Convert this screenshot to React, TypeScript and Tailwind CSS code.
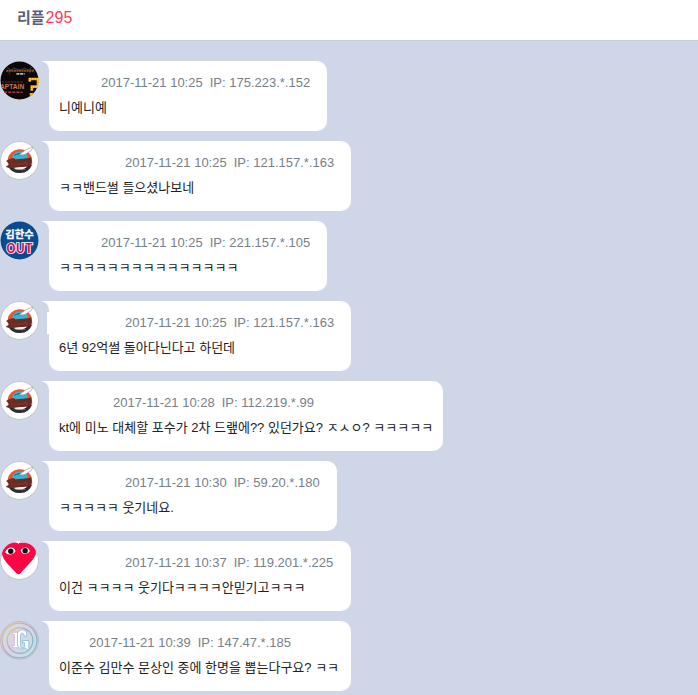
/**
 * 리플 목록 - 말풍선 형태의 댓글
 */
import type { ReactNode } from "react";

type AvatarKind = "captain" | "giants" | "out" | "heart" | "crest";

interface Reply {
  id: number;
  avatar: AvatarKind;
  date: string;
  ip: string;
  text: string;
  /** 말풍선 너비 */
  bubbleCls: string;
  /** 닉네임 자리 */
  nameCls: string;
  notch?: boolean;
}

const replies: Reply[] = [
  { id: 1, avatar: "captain", date: "2017-11-21 10:25", ip: "175.223.*.152", text: "니예니예", bubbleCls: "w-[278px]", nameCls: "w-[42px]" },
  { id: 2, avatar: "giants", date: "2017-11-21 10:25", ip: "121.157.*.163", text: "ㅋㅋ밴드썰 들으셨나보네", bubbleCls: "w-[302px]", nameCls: "w-[66px]" },
  { id: 3, avatar: "out", date: "2017-11-21 10:25", ip: "221.157.*.105", text: "ㅋㅋㅋㅋㅋㅋㅋㅋㅋㅋㅋㅋㅋㅋㅋ", bubbleCls: "w-[278px]", nameCls: "w-[42px]" },
  { id: 4, avatar: "giants", date: "2017-11-21 10:25", ip: "121.157.*.163", text: "6년 92억썰 돌아다닌다고 하던데", bubbleCls: "w-[302px]", nameCls: "w-[66px]", notch: true },
  { id: 5, avatar: "giants", date: "2017-11-21 10:28", ip: "112.219.*.99", text: "kt에 미노 대체할 포수가 2차 드랲에?? 있던가요? ㅈㅅㅇ? ㅋㅋㅋㅋㅋ", bubbleCls: "w-[394px]", nameCls: "w-[54px]" },
  { id: 6, avatar: "giants", date: "2017-11-21 10:30", ip: "59.20.*.180", text: "ㅋㅋㅋㅋㅋ 웃기네요.", bubbleCls: "w-[288px]", nameCls: "w-[66px]" },
  { id: 7, avatar: "heart", date: "2017-11-21 10:37", ip: "119.201.*.225", text: "이건 ㅋㅋㅋㅋ 웃기다ㅋㅋㅋㅋ안믿기고ㅋㅋㅋ", bubbleCls: "w-[302px]", nameCls: "w-[66px]" },
  { id: 8, avatar: "crest", date: "2017-11-21 10:39", ip: "147.47.*.185", text: "이준수 김만수 문상인 중에 한명을 뽑는다구요? ㅋㅋ", bubbleCls: "w-[302px]", nameCls: "w-[30px]" },
];

const art: Record<AvatarKind, ReactNode> = {
  captain: (
    <>
      <circle cx="19" cy="19" r="18.5" fill="#0d0708" />
      <path d="M7 6l3 3 4-2 5 2 5-2 4 2 3-3M9 9v4M29 9v4" stroke="#283a42" strokeWidth="1" fill="none" />
      <path d="M6 9.5h27" stroke="#8a5128" strokeWidth="2" strokeDasharray="2 .5" />
      <path d="M16 12.5h8" stroke="#b9b4b4" strokeWidth="1.6" strokeDasharray="3 .6" />
      <path d="M2 20.5h21" stroke="#713b2c" strokeWidth="1" strokeDasharray="2 1" />
      <text x="0" y="27.5" fontSize="6.5" fontWeight="700" fill="#c67a5c" className="font-['Liberation_Sans',sans-serif]">APTAIN</text>
      <path d="M4 30.5h18" stroke="#9c4133" strokeWidth="1.5" strokeDasharray="3 1" />
      <path d="M29 20v-2.5h8V25h-6v4" stroke="#e9a51f" strokeWidth="2.6" fill="none" />
      <path d="M29 20v-2.5h8V25h-6v4" stroke="#ffdf6b" strokeWidth="1.2" strokeDasharray="1.2 1.2" fill="none" />
      <path d="M29 32.5h4" stroke="#f0b321" strokeWidth="2.6" />
    </>
  ),
  giants: (
    <>
      <circle cx="19" cy="19" r="18.5" fill="#fff" stroke="#c3c3c3" />
      <path d="M7.5 18a12 11 0 0 1 23.500-2l.5 7H8z" fill="#e8553a" />
      <path d="M9.500 24a10.500 8.500 0 0 0 20-1" fill="none" stroke="#2c2e33" strokeWidth="3.400" />
      <path d="M12 17c0-5 5-8 10-6.500 4 1 6 4 5 7.500z" fill="#35b4d8" />
      <path d="M14 14c3-2 6-1 8-3" stroke="#1d4a63" strokeWidth=".8" fill="none" />
      <path d="M19 13.500c1-2 4-3 6-5l7.500-3-2.500 4.500c-3 .5-4 3-7 3.500z" fill="#fff" stroke="#8d8883" strokeWidth=".5" />
      <path d="M6 19.500c4-3 8-3.500 9-1.500 5-1 10-.5 15-2 1.500 3 1 6-.5 8.500-5 1-11 .5-15 1.500-4 1-7 0-9-1 2-1 4-2 3-3z" fill="#672c22" />
      <path d="M10 20c2-1 3 0 2 1s-2 2 0 2.500 3-2.500 4-1.500 0 2 2 1l1-2 1 2 2-2 1 2 2-3 1 3 2-2" fill="none" stroke="#94432f" strokeWidth=".6" />
      <path d="M15 27.500h9" stroke="#e9a596" strokeWidth="1" strokeDasharray="2 .7" />
    </>
  ),
  out: (
    <>
      <circle cx="19" cy="19" r="18.5" fill="#084b90" />
      <text x="19" y="17" textAnchor="middle" fontSize="10" fontWeight="700" fill="#fff" stroke="#fff" strokeWidth=".3" className="font-['Noto_Sans_CJK_KR',sans-serif]">김한수</text>
      <text x="19" y="31" textAnchor="middle" fontSize="12" fontWeight="700" fill="#dc0b57" stroke="#fff" strokeWidth="1.6" paintOrder="stroke" className="font-['Noto_Sans_CJK_KR',sans-serif]">OUT</text>
    </>
  ),
  heart: (
    <>
      <circle cx="19" cy="19" r="18.5" fill="#fff" stroke="#c3c3c3" />
      <path d="M18 2C8 0 2 7 2 13c1 6 9 13 14 18.500q2 2 4 0c6-7 13-13 15-19C36 6 29 0 18 2z" fill="#ff0543" />
      <path d="M15 0l3 3 2-3z" fill="#fff" />
      <path d="M5 11c2-6 8-6 10-2 0 4-7 6-10 2zM20 9c4-5 9-2 9 1-3 4-8 3-9-1z" fill="#fff" />
      <circle cx="10.500" cy="10" r="2.600" fill="#111" />
      <circle cx="24.500" cy="9.500" r="2.600" fill="#111" />
    </>
  ),
  crest: (
    <>
      <defs>
        <linearGradient id="crestRing" x1="0" y1="0" x2="1" y2="1">
          <stop offset="0" stopColor="#e2d36c" />
          <stop offset=".3" stopColor="#dba6af" />
          <stop offset=".55" stopColor="#a7a2cd" />
          <stop offset=".8" stopColor="#75bfcb" />
          <stop offset="1" stopColor="#a9c89b" />
        </linearGradient>
      </defs>
      <circle cx="19" cy="19" r="18.500" fill="#d2d8e4" stroke="#b9bec4" />
      <circle cx="19" cy="19" r="17" fill="none" stroke="url(#crestRing)" strokeWidth="1.2" />
      <circle cx="19.500" cy="19" r="12.500" fill="none" stroke="url(#crestRing)" strokeWidth="1.2" />
      <path d="M12 11h7v2h-2v11h2v2h-7v-2h2V13h-2z" fill="#fff" stroke="#d39bc2" strokeWidth=".6" />
      <path d="M26 9v6h-2c-1-4-4-4-4-1v10c1 4 4 3 4 0v-3h-2v-2h6v9h-2l-1-2c-3 3-8 1-8-4V14c0-5 4-7 8-4z" fill="#fff" stroke="#71a8cc" strokeWidth=".6" />
    </>
  ),
};

function Avatar({ kind }: { kind: AvatarKind }) {
  return (
    <svg viewBox="0 0 38 38" className="size-[39px] shrink-0 rounded-full" aria-hidden="true">
      {art[kind]}
    </svg>
  );
}

function ReplyItem({ reply }: { reply: Reply }) {
  return (
    <li className="flex items-start">
      <Avatar kind={reply.avatar} />
      <div className={`relative ml-[10px] h-[70px] rounded-[10px] rounded-tl-none bg-white px-[10px] pt-[9px] whitespace-nowrap ${reply.bubbleCls}`}>
        <svg viewBox="0 0 8 10" className="absolute top-0 right-full h-[10px] w-2 text-white" aria-hidden="true">
          <path d="M0 0H8V10C8 4 5 1 0 0z" fill="currentColor" />
        </svg>
        {reply.notch && <span className="absolute top-[11px] right-full h-[22px] w-[2px] bg-white" />}
        <div className="flex h-[26px] items-center text-[#777f88]">
          <span className={`shrink-0 ${reply.nameCls}`} />
          <span className="mr-[7px]">{reply.date}</span>
          <span>IP: {reply.ip}</span>
        </div>
        <p className="h-6 leading-6 text-[#222]">{reply.text}</p>
      </div>
    </li>
  );
}

export default function App() {
  return (
    <div className="flex min-h-screen flex-col bg-[#cfd6e8] font-['Liberation_Sans','Noto_Sans_CJK_KR',sans-serif] text-[13px]">
      <header className="flex h-[41px] items-center border-b border-[#c8cdd2] bg-white px-[17px] pb-1">
        <h2 className="flex items-center gap-px text-[15px] font-bold text-[#5b607a]">
          리플<span className="text-base font-normal text-[#ff3b57]">295</span>
        </h2>
      </header>
      <ul className="flex flex-col gap-[10px] py-5 pb-1">
        {replies.map((r) => (
          <ReplyItem key={r.id} reply={r} />
        ))}
      </ul>
    </div>
  );
}
